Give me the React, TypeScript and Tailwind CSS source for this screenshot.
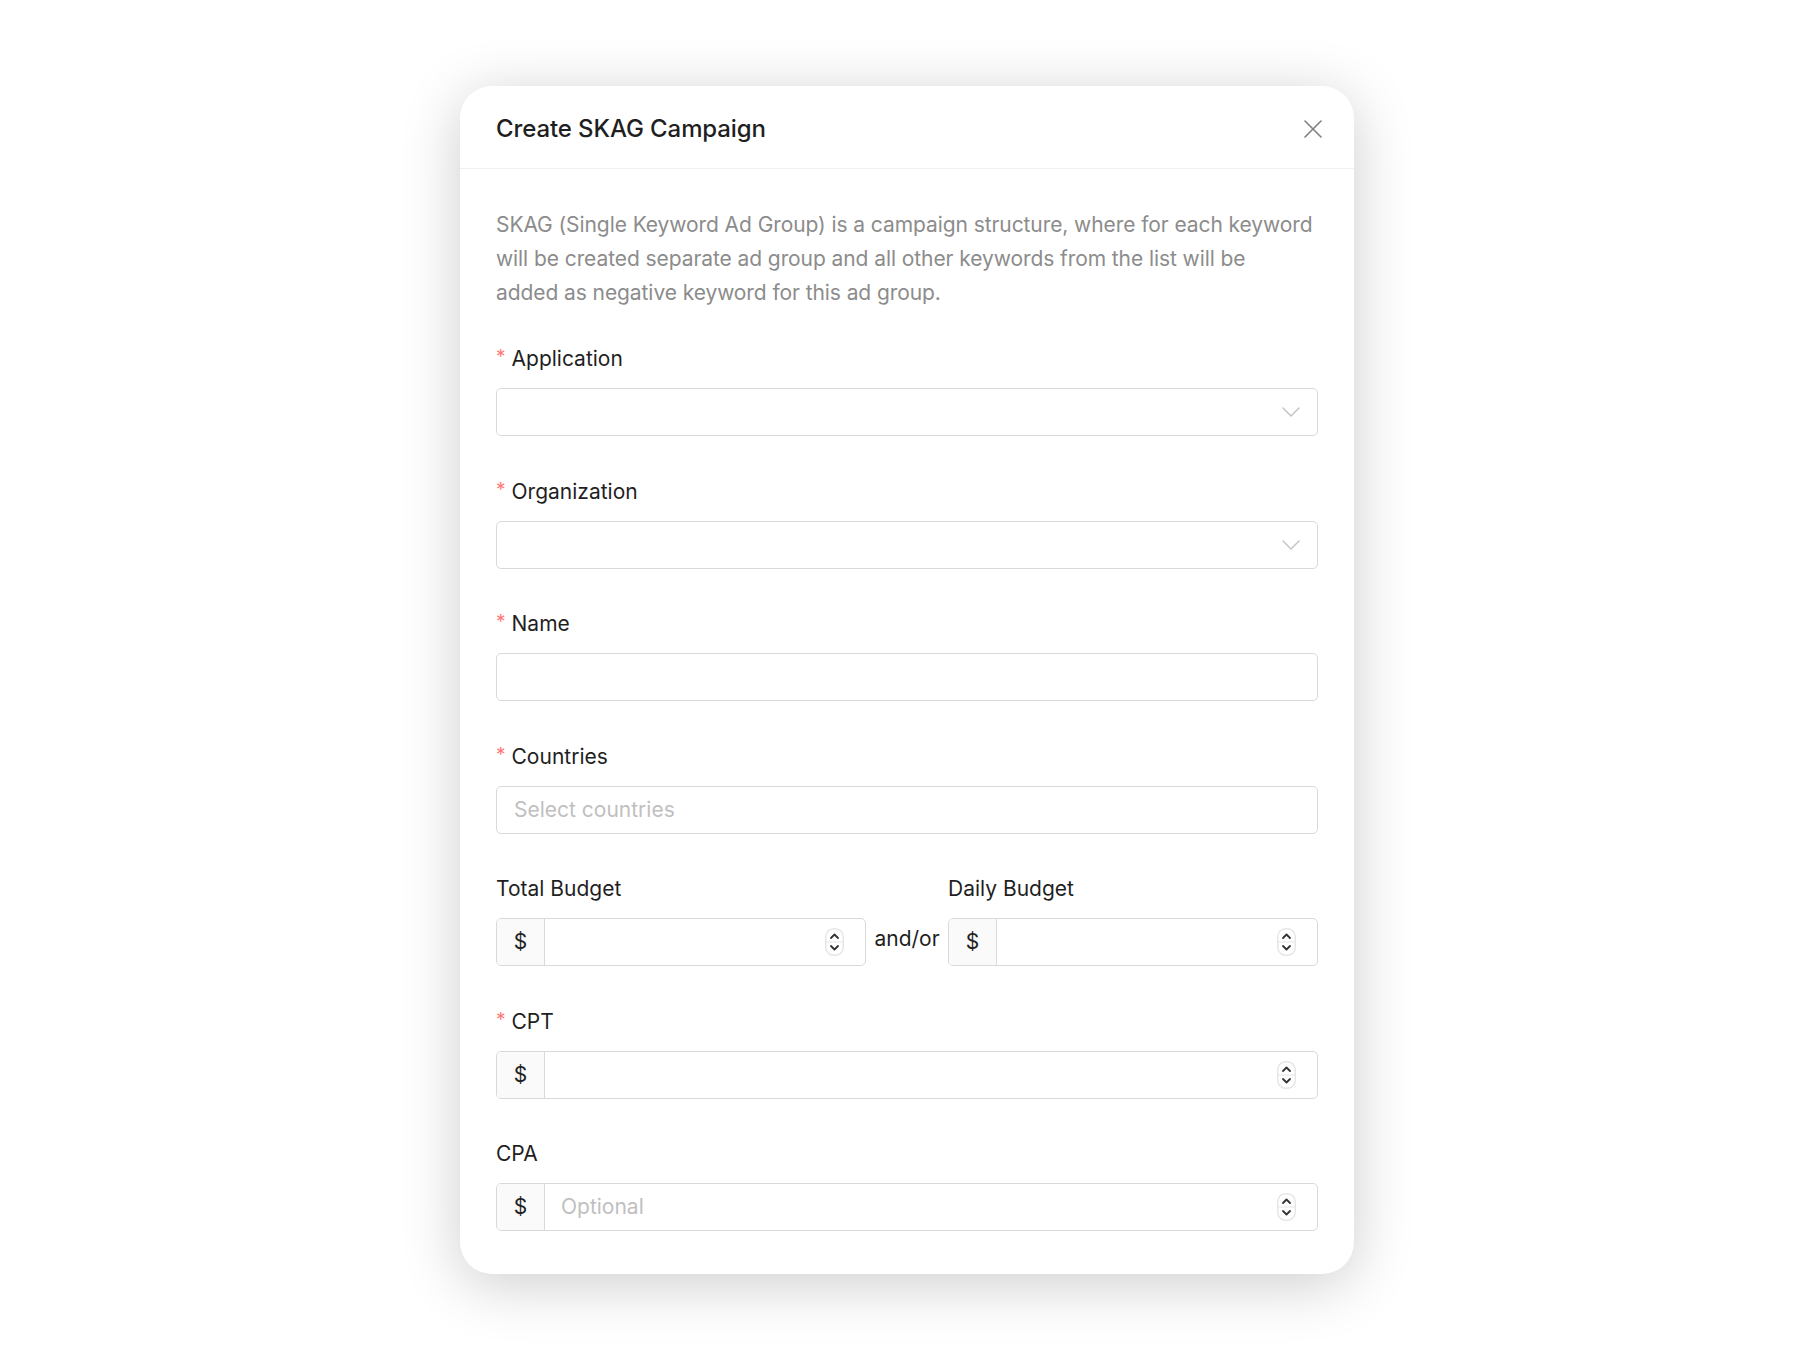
import React from 'react';

const font = { fontFamily: 'Inter, "Noto Sans", sans-serif' };

function Chevron() {
  return (
    <svg width="18" height="10" viewBox="0 0 18 10" fill="none" className="shrink-0">
      <path d="M1 1l8 8 8-8" stroke="#c4c4c4" strokeWidth="1.5" strokeLinecap="round" strokeLinejoin="round" />
    </svg>
  );
}

function Spinner() {
  return (
    <svg width="19" height="28" viewBox="0 0 19 28" fill="none" className="shrink-0">
      <rect x="0.75" y="0.75" width="17.5" height="26.5" rx="8" fill="#fff" stroke="#e6e6e6" strokeWidth="1.5" />
      <line x1="1" y1="14" x2="18" y2="14" stroke="#e6e6e6" strokeWidth="1" />
      <path d="M6 10l3.5-3.5L13 10" stroke="#333" strokeWidth="1.8" strokeLinecap="round" strokeLinejoin="round" />
      <path d="M6 18l3.5 3.5L13 18" stroke="#333" strokeWidth="1.8" strokeLinecap="round" strokeLinejoin="round" />
    </svg>
  );
}

function Label({ text, required }: { text: string; required?: boolean }) {
  return (
    <div className="h-[33px] mb-[12px] pb-[2px] flex items-center text-[21px] leading-[33px] text-[#1f1f1f]">
      {required && <span className="text-[#ff7875] text-[19px] mr-[6px] -translate-y-[2px]">*</span>}
      {text}
    </div>
  );
}

function SelectBox() {
  return (
    <div className="h-[48px] border-[1.5px] border-[#d9d9d9] rounded-[5px] bg-white flex items-center justify-end pr-[17px]">
      <Chevron />
    </div>
  );
}

function MoneyInput({ placeholder }: { placeholder?: string }) {
  return (
    <div className="h-[48px] border-[1.5px] border-[#d9d9d9] rounded-[5px] bg-white flex items-stretch overflow-hidden">
      <div className="w-[48px] shrink-0 bg-[#fafafa] border-r-[1.5px] border-[#d9d9d9] flex items-center justify-center text-[21px] text-[#1f1f1f]">
        $
      </div>
      <div className="flex-1 flex items-center pl-[16px] pr-[21px]">
        <span className="flex-1 text-[21px] text-[#bfbfbf]">{placeholder}</span>
        <Spinner />
      </div>
    </div>
  );
}

export default function App() {
  return (
    <div className="min-h-screen bg-white flex items-center justify-center" style={font}>
      <div className="w-[894px] bg-white rounded-[32px] shadow-[0_10px_60px_rgba(0,0,0,0.2)]">
        <div className="h-[83px] pt-[3px] border-b-[1.5px] border-[#f0f0f0] flex items-center justify-between pl-[36px] pr-[30px]">
          <h1 className="text-[24px] font-medium text-[#1f1f1f] tracking-[-0.1px]">Create SKAG Campaign</h1>
          <button className="w-[22px] h-[22px] flex items-center justify-center">
            <svg width="18" height="18" viewBox="0 0 18 18" fill="none">
              <path d="M1 1l16 16M17 1L1 17" stroke="#7f7f7f" strokeWidth="1.6" strokeLinecap="round" />
            </svg>
          </button>
        </div>

        <div className="px-[36px] pt-[39px] pb-[43px]">
          <p className="text-[21px] leading-[34px] text-[#8c8c8c] tracking-[-0.08px] whitespace-nowrap mb-[33px]">
            SKAG (Single Keyword Ad Group) is a campaign structure, where for each keyword
            <br />
            will be created separate ad group and all other keywords from the list will be
            <br />
            added as negative keyword for this ad group.
          </p>

          <div className="flex flex-col gap-[39.5px]">
            <div>
              <Label text="Application" required />
              <SelectBox />
            </div>
            <div>
              <Label text="Organization" required />
              <SelectBox />
            </div>
            <div>
              <Label text="Name" required />
              <div className="h-[48px] border-[1.5px] border-[#d9d9d9] rounded-[5px] bg-white" />
            </div>
            <div>
              <Label text="Countries" required />
              <div className="h-[48px] border-[1.5px] border-[#d9d9d9] rounded-[5px] bg-white flex items-center pl-[17px] text-[21px] text-[#bfbfbf]">
                Select countries
              </div>
            </div>
            <div className="grid grid-cols-[370px_1fr_370px]">
              <div>
                <Label text="Total Budget" />
                <MoneyInput />
              </div>
              <div className="flex items-end justify-center pb-[12px] text-[21px] text-[#1f1f1f]">and/or</div>
              <div>
                <Label text="Daily Budget" />
                <MoneyInput />
              </div>
            </div>
            <div>
              <Label text="CPT" required />
              <MoneyInput />
            </div>
            <div>
              <Label text="CPA" />
              <MoneyInput placeholder="Optional" />
            </div>
          </div>
        </div>
      </div>
    </div>
  );
}
